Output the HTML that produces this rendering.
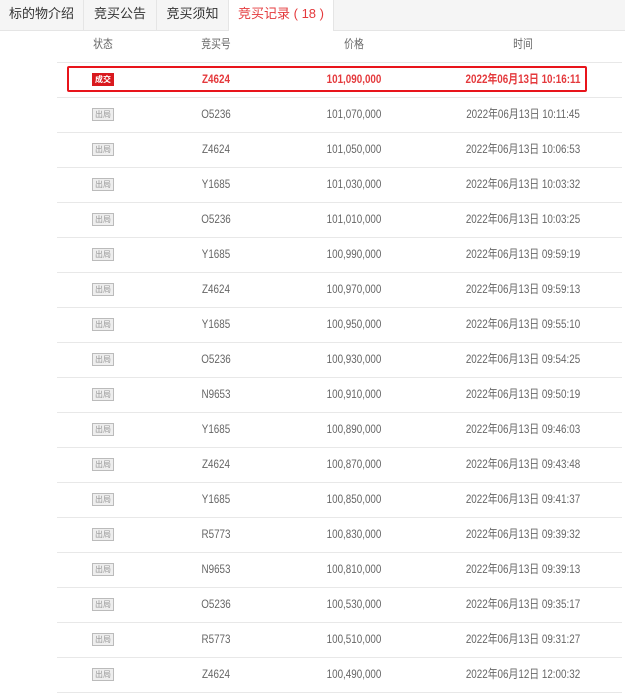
<!DOCTYPE html><html><head><meta charset="utf-8"><style>
body{margin:0;width:625px;height:698px;overflow:hidden;background:#fff;font-family:"Liberation Sans","Noto Sans CJK SC",sans-serif;}
.tabs{height:30px;background:#f5f5f5;border-bottom:1px solid #e5e5e5;position:relative}
.tab{position:absolute;top:0;height:30px;line-height:28px;font-size:13px;color:#333;text-align:center;border-right:1px solid #e5e5e5}
.tab.act{background:#fff;color:#e4393c;height:31px}
.row{position:absolute;left:57px;width:565px;height:35px;border-bottom:1px solid #e8e8e8;font-size:12px;color:#666}
.row span{position:absolute;top:0;line-height:35px;transform:translateX(-50%) scaleX(0.82);white-space:nowrap}
.b{display:inline-block;width:20px;height:11px;line-height:11px;font-size:8px;text-align:center;border:1px solid #bbb;background:#eee;color:#999;vertical-align:middle}
.hl{position:absolute;left:67px;top:66px;width:516px;height:22px;border:2px solid #e8141b;border-radius:2px}
</style></head><body>
<div class="tabs">
<div class="tab" style="left:0;width:83px">标的物介绍</div>
<div class="tab" style="left:84px;width:72px">竞买公告</div>
<div class="tab" style="left:157px;width:71px">竞买须知</div>
<div class="tab act" style="left:229px;width:104px">竞买记录 ( 18 )</div>
</div>
<div id="t"></div>
<div class="hl"></div>
<script>
var d=[["Z4624","101,090,000","2022年06月13日 10:16:11"],["O5236","101,070,000","2022年06月13日 10:11:45"],["Z4624","101,050,000","2022年06月13日 10:06:53"],["Y1685","101,030,000","2022年06月13日 10:03:32"],["O5236","101,010,000","2022年06月13日 10:03:25"],["Y1685","100,990,000","2022年06月13日 09:59:19"],["Z4624","100,970,000","2022年06月13日 09:59:13"],["Y1685","100,950,000","2022年06月13日 09:55:10"],["O5236","100,930,000","2022年06月13日 09:54:25"],["N9653","100,910,000","2022年06月13日 09:50:19"],["Y1685","100,890,000","2022年06月13日 09:46:03"],["Z4624","100,870,000","2022年06月13日 09:43:48"],["Y1685","100,850,000","2022年06月13日 09:41:37"],["R5773","100,830,000","2022年06月13日 09:39:32"],["N9653","100,810,000","2022年06月13日 09:39:13"],["O5236","100,530,000","2022年06月13日 09:35:17"],["R5773","100,510,000","2022年06月13日 09:31:27"],["Z4624","100,490,000","2022年06月12日 12:00:32"]];
var h='<div class="row" style="top:31px;height:31px"><span style="left:46px;line-height:27px">状态</span><span style="left:159px;line-height:27px">竞买号</span><span style="left:297px;line-height:27px">价格</span><span style="left:466px;line-height:27px">时间</span></div>';
d.forEach(function(r,i){var top=62+35*i;var f=i==0;
var st=f?'color:#e4393c;font-weight:bold':'';
var b=f?'<i class="b" style="background:#d9191e;border-color:#d9191e;color:#fff;font-style:normal">成交</i>':'<i class="b" style="font-style:normal">出局</i>';
h+='<div class="row" style="top:'+top+'px;'+st+'"><span style="left:46px;transform:translateX(-50%)">'+b+'</span><span style="left:159px">'+r[0]+'</span><span style="left:297px">'+r[1]+'</span><span style="left:466px">'+r[2]+'</span></div>';});
document.getElementById('t').innerHTML=h;
</script>
</body></html>
